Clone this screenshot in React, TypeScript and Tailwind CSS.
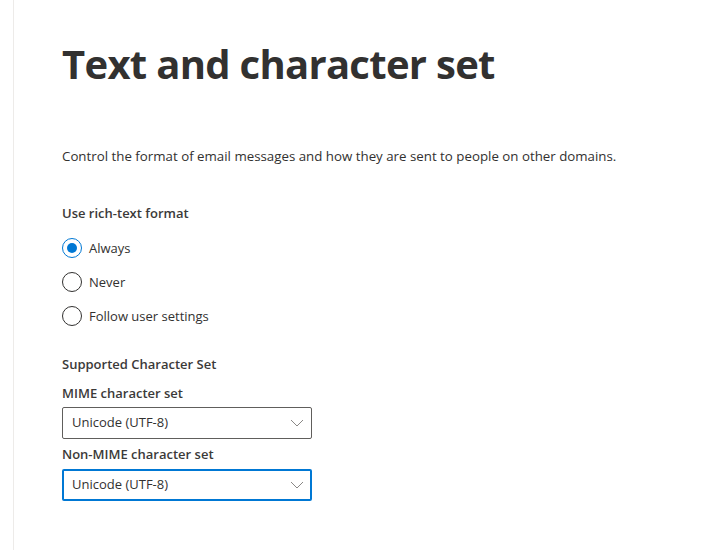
import { useState } from 'react';

const options = ['Always', 'Never', 'Follow user settings'];

function Chevron() {
  return (
    <svg width="14" height="8" viewBox="0 0 14 8" className="text-[#8a8886]">
      <path d="M1 1l6 6 6-6" fill="none" stroke="currentColor" strokeWidth="1" />
    </svg>
  );
}

function Dropdown({ value, focused }: { value: string; focused?: boolean }) {
  return (
    <div
      className={`flex h-8 w-[250px] items-center justify-between rounded-[2px] ${
        focused ? 'border-2 border-[#0078d4] pl-2 pr-[6px]' : 'border border-[#605e5c] pl-[9px] pr-[7px]'
      }`}
    >
      <span className="text-[13px] text-[#323130]">{value}</span>
      <Chevron />
    </div>
  );
}

export default function App() {
  const [format, setFormat] = useState('Always');

  return (
    <div
      className="min-h-screen bg-white text-[#323130]"
      style={{ fontFamily: '"Open Sans", "Noto Sans", sans-serif' }}
    >
      <div className="ml-[13px] min-h-[550px] border-l border-[#edebe9] pl-[48px] pt-[34px]">
        <h1 className="text-[40px] font-bold leading-[60px] tracking-[-0.7px]">Text and character set</h1>

        <p className="mt-[52px] text-[13.3px] leading-5">
          Control the format of email messages and how they are sent to people on other domains.
        </p>

        {/* section labels: Segoe semibold is lighter than Open Sans, so tone the colour down a bit */}
        <div className="mt-[37px] text-[13px] font-semibold leading-5 text-[#3b3a39]">Use rich-text format</div>

        <div className="mt-[15px] flex flex-col gap-[14px]">
          {options.map((opt) => {
            const checked = format === opt;
            return (
              <label key={opt} className="flex h-5 cursor-pointer items-center gap-[7px]" onClick={() => setFormat(opt)}>
                <span
                  className={`flex h-5 w-5 items-center justify-center rounded-full border ${
                    checked ? 'border-[#0078d4]' : 'border-[#323130]'
                  }`}
                >
                  {checked && <span className="h-[10px] w-[10px] rounded-full bg-[#0078d4]" />}
                </span>
                <span className="text-[13px] leading-5">{opt}</span>
              </label>
            );
          })}
        </div>

        <div className="mt-[28px] text-[13px] font-semibold leading-5 text-[#3b3a39]">Supported Character Set</div>
        <div className="mt-[9px] text-[13px] font-semibold leading-5 text-[#3b3a39]">MIME character set</div>
        <div className="mt-[4px]">
          <Dropdown value="Unicode (UTF-8)" />
        </div>
        <div className="mt-[5px] text-[13px] font-semibold leading-5 text-[#3b3a39]">Non-MIME character set</div>
        <div className="mt-[5px]">
          <Dropdown value="Unicode (UTF-8)" focused />
        </div>
      </div>
    </div>
  );
}
